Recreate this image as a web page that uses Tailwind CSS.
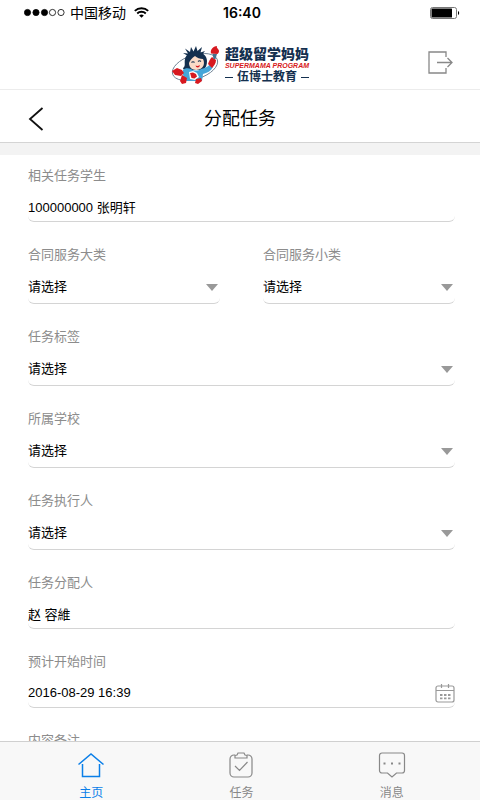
<!DOCTYPE html>
<html lang="zh-CN">
<head>
  <meta charset="UTF-8" />
  <title>分配任务</title>
  <meta name="viewport" content="width=device-width, initial-scale=1.0" />
  <script src="https://cdn.jsdelivr.net/npm/@tailwindcss/browser@4"></script>
</head>
<body class="flex h-screen flex-col overflow-hidden bg-white font-['Liberation_Sans','Noto_Sans_CJK_SC',sans-serif] text-black">

  <!-- Status bar -->
  <div class="grid h-[25px] shrink-0 grid-cols-3 items-center pl-6 pr-5 text-sm">
    <div class="flex items-center gap-1">
      <svg class="h-[9px] w-[42px]" viewBox="0 0 42 9">
        <g stroke="#000" stroke-width=".8">
          <circle cx="3.5" cy="4.5" r="3.1" />
          <circle cx="12" cy="4.5" r="3.1" />
          <circle cx="20.5" cy="4.5" r="3.1" />
          <circle cx="28.5" cy="4.5" r="3.1" fill="none" />
          <circle cx="37" cy="4.5" r="3.1" fill="none" />
        </g>
      </svg>
      <span class="whitespace-nowrap">中国移动</span>
      <svg class="ml-1 h-[11px] w-[15px] shrink-0" viewBox="0 0 15 11" fill="none" stroke="#000" stroke-width="1.9">
        <path d="M.8 3.9a9.6 9.6 0 0 1 13.4 0M3.2 6.5a6.2 6.2 0 0 1 8.6 0" />
        <path d="M7.5 10.8 5.2 8.5a3.3 3.3 0 0 1 4.600 0z" fill="#000" stroke="none" />
      </svg>
    </div>
    <span class="text-center font-['Inter'] font-semibold">16:40</span>
    <svg class="h-3 w-[30px] justify-self-end" viewBox="0 0 30 12">
      <rect x=".5" y=".5" width="26" height="11" rx="2" fill="#fff" stroke="#777" />
      <rect x="1.500" y="1.500" width="20.500" height="9" rx=".5" />
      <path d="M28 4v4c1.600-.5 1.600-3.500 0-4z" />
    </svg>
  </div>

  <!-- Logo bar -->
  <header class="grid h-[65px] shrink-0 grid-cols-[1fr_auto_1fr] items-center border-b border-[#ececec] px-[26px] pt-3">
    <a href="#" class="col-start-2 flex items-center gap-1 pt-1" aria-label="超级留学妈妈">
      <svg class="h-10 w-[50px]" viewBox="0 0 50 40">
        <ellipse cx="24" cy="22" rx="23.500" ry="12" transform="rotate(-18 24 22)" fill="none" stroke="#6f8193" stroke-width=".9" />
        <path d="m17 11-5-3 5 .5-3-5 5 3.500L20 2l2.500 4.500L25 1l1.500 5L31 2l-1.500 5.500L34 6l-4 5z" fill="#14304f" />
        <path d="M12 23c3-2 1-5 2-9 1-5 6-7 12-7 6 0 10 4 10 9 0 4-1 7-4 9H15c-2 0-3-1-3-2z" fill="#14304f" />
        <path d="M18 18c1-3 3-5 6-7 2 2 5 3 8 3 2 4 1 9-4 10.500-5 1.500-10-1-10-6.500z" fill="#fbdcc8" />
        <path d="M20.500 17.500q1.500-1.500 3 0M27 16.500q1.500-1.500 3 0" fill="none" stroke="#14304f" stroke-width="1.100" />
        <path d="M24.500 20.500q2 1 4.500-.5-.5 2.500-2.300 2.500t-2.200-2z" fill="#d71920" />
        <path d="M12 25c2-2 5-2 8-1 3 2 7 2 10 0 4-1 7-2 9-5l3 3c-2 4-6 6-10 7l-1 7H15l-3-6z" fill="#45a6d9" />
        <path d="M37 19c1-3 2-5 4-7l4 3c0 3-2 6-4 8z" fill="#d71920" />
        <path d="m18 27 4-1 4 2 2 4-4 3-5-1z" fill="#fff" />
        <path d="m19 28 3-.5 3 1.500 1 2.500-2.500 2-3-.5z" fill="#d71920" />
        <path d="m1 26 5-3 5 2 2 3-3 3-6-1z" fill="#d71920" />
        <path d="m11 30 5 3-1 5-4 1-2-3zM25 34l5-1 1 3-4 3-3-1z" fill="#d71920" />
        <path d="m41.500 8.500 4.500.5-1.500 5h-2z" fill="#45708f" />
        <path d="M40 8.500c-1-4 2-7 6-7.500-1 2 2 3 2 5 0 1.500-1 2.500-1.500 3z" fill="#d71920" />
      </svg>
      <span class="flex flex-col items-center">
        <span class="whitespace-nowrap text-sm leading-4 font-black text-[#14304f]">超级留学妈妈</span>
        <span class="whitespace-nowrap text-[7px] leading-2 font-bold italic text-[#d71920]">SUPERMAMA PROGRAM</span>
        <span class="flex items-center gap-1 whitespace-nowrap text-xs leading-[14px] font-bold text-[#14304f]">
          <i class="h-px w-2 bg-[#14304f]"></i>伍博士教育<i class="h-px w-2 bg-[#14304f]"></i>
        </span>
      </span>
    </a>
    <button type="button" class="justify-self-end" aria-label="退出">
      <svg class="h-6 w-[26px]" viewBox="0 0 26 24" fill="none" stroke="#888" stroke-width="1.300">
        <path d="M18 6V1H1v21h17v-5M9 11.500h15M19.500 7l4.500 4.500-4.500 4.500" />
      </svg>
    </button>
  </header>

  <!-- Page title -->
  <div class="grid h-[53px] shrink-0 grid-cols-[1fr_auto_1fr] items-center border-b border-[#d4d4d4] px-7 pt-[6px]">
    <button type="button" class="justify-self-start" aria-label="返回">
      <svg class="h-6 w-4" viewBox="0 0 16 24" fill="none" stroke="#111" stroke-width="1.800">
        <path d="M14.500 1 2 12l12.500 11" />
      </svg>
    </button>
    <h1 class="text-lg">分配任务</h1>
  </div>

  <!-- Form -->
  <main class="min-h-0 flex-1 overflow-hidden border-t-12 border-[#f3f3f3]">
    <form class="flex flex-col gap-[23px] pt-[11px] pr-[25px] pl-7 text-[13px]">
      <div class="flex flex-col gap-[5px]">
        <label for="student" class="leading-5 text-[#8c8c8c]">相关任务学生</label>
        <input id="student" type="text" value="100000000 张明轩" class="h-[31px] w-full rounded-b-md border-b border-[#d4d4d4]" />
      </div>

      <div class="grid grid-cols-2 gap-[43px]">
        <div class="flex flex-col gap-[5px]">
          <label for="category" class="leading-5 text-[#8c8c8c]">合同服务大类</label>
          <div class="relative">
            <select id="category" class="block h-[34px] w-full appearance-none rounded-b-md border-b border-[#d4d4d4]"><option>请选择</option></select>
            <svg class="pointer-events-none absolute top-[14px] right-[2px] h-[7px] w-3" viewBox="0 0 12 7"><path d="M0 0h12L6 7z" fill="#999" /></svg>
          </div>
        </div>
        <div class="flex flex-col gap-[5px]">
          <label for="subcategory" class="leading-5 text-[#8c8c8c]">合同服务小类</label>
          <div class="relative">
            <select id="subcategory" class="block h-[34px] w-full appearance-none rounded-b-md border-b border-[#d4d4d4]"><option>请选择</option></select>
            <svg class="pointer-events-none absolute top-[14px] right-[2px] h-[7px] w-3" viewBox="0 0 12 7"><path d="M0 0h12L6 7z" fill="#999" /></svg>
          </div>
        </div>
      </div>

      <div class="flex flex-col gap-[5px]">
        <label for="tag" class="leading-5 text-[#8c8c8c]">任务标签</label>
        <div class="relative">
          <select id="tag" class="block h-[34px] w-full appearance-none rounded-b-md border-b border-[#d4d4d4]"><option>请选择</option></select>
          <svg class="pointer-events-none absolute top-[14px] right-[2px] h-[7px] w-3" viewBox="0 0 12 7"><path d="M0 0h12L6 7z" fill="#999" /></svg>
        </div>
      </div>

      <div class="flex flex-col gap-[5px]">
        <label for="school" class="leading-5 text-[#8c8c8c]">所属学校</label>
        <div class="relative">
          <select id="school" class="block h-[34px] w-full appearance-none rounded-b-md border-b border-[#d4d4d4]"><option>请选择</option></select>
          <svg class="pointer-events-none absolute top-[14px] right-[2px] h-[7px] w-3" viewBox="0 0 12 7"><path d="M0 0h12L6 7z" fill="#999" /></svg>
        </div>
      </div>

      <div class="flex flex-col gap-[5px]">
        <label for="executor" class="leading-5 text-[#8c8c8c]">任务执行人</label>
        <div class="relative">
          <select id="executor" class="block h-[34px] w-full appearance-none rounded-b-md border-b border-[#d4d4d4]"><option>请选择</option></select>
          <svg class="pointer-events-none absolute top-[14px] right-[2px] h-[7px] w-3" viewBox="0 0 12 7"><path d="M0 0h12L6 7z" fill="#999" /></svg>
        </div>
      </div>

      <div class="flex flex-col gap-[5px]">
        <label for="assigner" class="leading-5 text-[#8c8c8c]">任务分配人</label>
        <input id="assigner" type="text" value="赵 容維" class="h-[31px] w-full rounded-b-md border-b border-[#d4d4d4]" />
      </div>

      <div class="flex flex-col gap-[5px]">
        <label for="start" class="leading-5 text-[#8c8c8c]">预计开始时间</label>
        <div class="relative">
          <input id="start" type="text" value="2016-08-29 16:39" class="block h-[31px] w-full rounded-b-md border-b border-[#d4d4d4]" />
          <svg class="pointer-events-none absolute right-0 bottom-[5px] h-5 w-5" viewBox="0 0 20 20" fill="none" stroke="#999" stroke-width="1.200">
            <rect x="1" y="3" width="18" height="16" rx="2" />
            <path d="M1 7.500h18M6.500 1v4M13.500 1v4" />
            <path d="M5 12h2.500M9 12h2.500M13 12h2.500M5 15.300h2.500M9 15.300h2.500M13 15.300h2.500" stroke-width="1.800" />
          </svg>
        </div>
      </div>

      <div class="flex flex-col gap-[5px]">
        <label for="remark" class="leading-5 text-[#8c8c8c]">内容备注</label>
        <textarea id="remark" rows="3" class="w-full rounded-b-md border-b border-[#d4d4d4]"></textarea>
      </div>
    </form>
  </main>

  <!-- Tab bar -->
  <nav class="flex h-[59px] shrink-0 justify-center border-t border-[#d0d0d0] bg-[#f8f8f8] pr-[13px] pl-4 text-xs text-[#888]">
    <a href="#" class="flex flex-1 flex-col items-center gap-[6px] pt-[9px] text-[#0b7fe8]">
      <svg class="h-7 w-7 shrink-0" viewBox="0 0 28 28" fill="none" stroke="currentColor" stroke-width="1.500">
        <path d="M1.500 13.500 14 3l12.500 10.500M5.500 13v12.500h17V13" />
      </svg>
      主页
    </a>
    <a href="#" class="flex flex-1 flex-col items-center gap-[6px] pt-[9px]">
      <svg class="h-7 w-7 shrink-0" viewBox="0 0 28 28" fill="none" stroke="currentColor" stroke-width="1.200">
        <path d="M8 4H7a4 4 0 0 0-4 4v14a4 4 0 0 0 4 4h14a4 4 0 0 0 4-4V8a4 4 0 0 0-4-4h-1" />
        <path d="M8 7V4.500l2-.5 1-2h6l1 2 2 .5V7zM8 15l4.500 4.500 8-8.500" />
      </svg>
      任务
    </a>
    <a href="#" class="flex flex-1 flex-col items-center gap-[6px] pt-[9px]">
      <svg class="h-7 w-7 shrink-0" viewBox="0 0 28 28" fill="none" stroke="currentColor" stroke-width="1.200">
        <path d="M4 2h20a2.500 2.500 0 0 1 2.500 2.500v15A2.500 2.500 0 0 1 24 22h-5.500L14 26l-4.500-4H4a2.500 2.500 0 0 1-2.500-2.500v-15A2.500 2.500 0 0 1 4 2z" />
        <path d="M5.500 12.500h2M13 12.500h2M20.500 12.500h2" stroke-width="2" />
      </svg>
      消息
    </a>
  </nav>

</body>
</html>
